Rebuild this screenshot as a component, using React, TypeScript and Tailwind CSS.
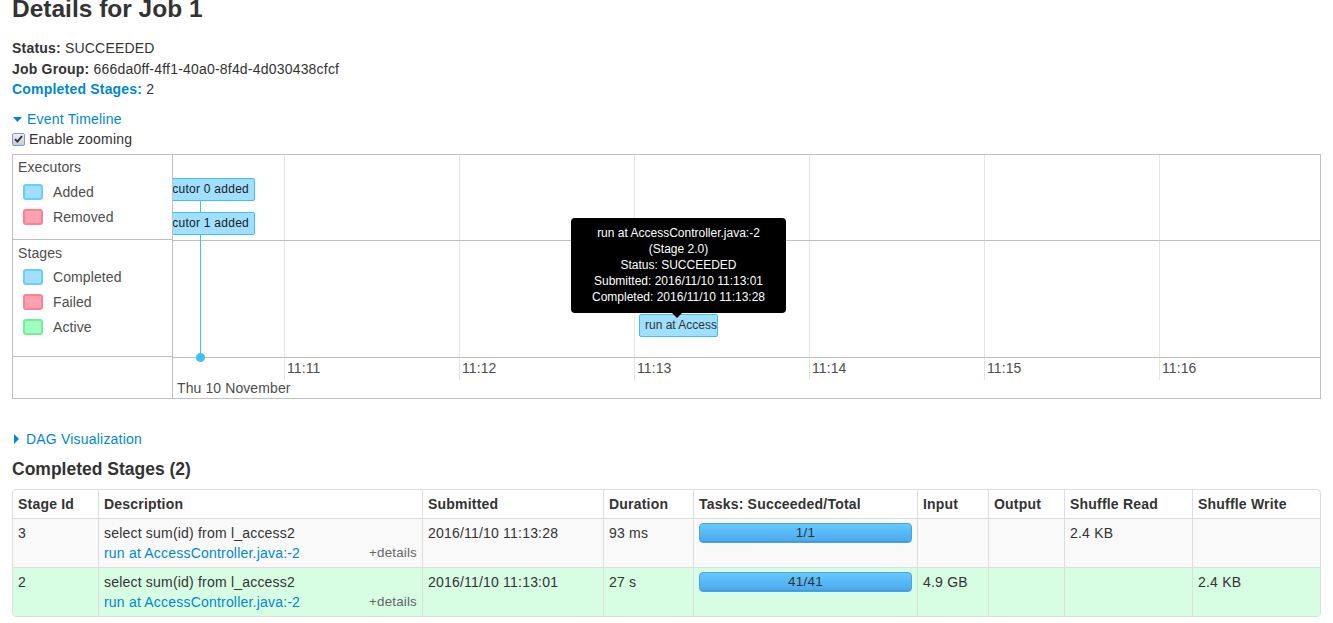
import React from 'react';

const font = { fontFamily: '"Liberation Sans", Arial, sans-serif' };

const gridX = [111, 286, 461, 636, 811, 986];
const ticks = ['11:11', '11:12', '11:13', '11:14', '11:15', '11:16'];

function Swatch({ kind }: { kind: 'blue' | 'red' | 'green' }) {
  const cls =
    kind === 'blue'
      ? 'bg-[#a0dfff] border-[#6ccbff]'
      : kind === 'red'
        ? 'bg-[#ffa1b0] border-[#ff7f95]'
        : 'bg-[#a0ffc0] border-[#6ff09a]';
  return <span className={`w-[20px] h-[16px] rounded-[3px] border-2 ${cls}`} />;
}

function LegendItem({ kind, label }: { kind: 'blue' | 'red' | 'green'; label: string }) {
  return (
    <div className="h-[25px] flex items-center pl-[5px] gap-[10px]">
      <Swatch kind={kind} />
      <span>{label}</span>
    </div>
  );
}

function Timeline() {
  return (
    <div className="mt-[5px] border border-[#bfbfbf] flex text-[14px] leading-[20px] text-[#4d4d4d] tracking-[0.1px]">
      {/* legend */}
      <div className="w-[160px] border-r border-[#bfbfbf] flex flex-col">
        <div className="h-[85px] pl-[5px] pt-[2px] border-b border-[#bfbfbf]">
          <div>Executors</div>
          <div className="mt-[2px]">
            <LegendItem kind="blue" label="Added" />
            <LegendItem kind="red" label="Removed" />
          </div>
        </div>
        <div className="h-[117px] pl-[5px] pt-[3px] border-b border-[#bfbfbf]">
          <div>Stages</div>
          <div className="mt-[1px]">
            <LegendItem kind="blue" label="Completed" />
            <LegendItem kind="red" label="Failed" />
            <LegendItem kind="green" label="Active" />
          </div>
        </div>
        <div className="h-[40px]" />
      </div>

      {/* canvas */}
      <div className="relative flex-1 h-[243px] overflow-hidden">
        {gridX.map((x) => (
          <React.Fragment key={x}>
            <div className="absolute top-0 h-[202px] w-px bg-[#e5e5e5]" style={{ left: x }} />
            <div className="absolute top-[203px] h-[22px] w-px bg-[#e5e5e5]" style={{ left: x }} />
          </React.Fragment>
        ))}
        <div className="absolute left-0 right-0 top-[85px] h-px bg-[#bfbfbf]" />
        <div className="absolute left-0 right-0 top-[202px] h-px bg-[#bfbfbf]" />

        {/* executor line + dot */}
        <div className="absolute left-[27px] top-[46px] h-[156px] w-px bg-[#3ec0ff]" />
        <div className="absolute left-[23px] top-[198px] w-[9px] h-[9px] rounded-full bg-[#3ec0ff]" />

        <div className="absolute left-[-40px] top-[23px] w-[122px] h-[23px] border border-[#3ec0ff] rounded-[2px] bg-[#a0dfff] pr-[5px] text-right text-[12px] leading-[21px] text-[#1a1a1a] whitespace-nowrap tracking-[0.25px]">
          Executor 0 added
        </div>
        <div className="absolute left-[-40px] top-[57px] w-[122px] h-[23px] border border-[#3ec0ff] rounded-[2px] bg-[#a0dfff] pr-[5px] text-right text-[12px] leading-[21px] text-[#1a1a1a] whitespace-nowrap tracking-[0.25px]">
          Executor 1 added
        </div>

        <div className="absolute left-[466px] top-[159px] w-[79px] h-[23px] border border-[#3ec0ff] rounded-[2px] bg-[#a0dfff] px-[5px] text-[12px] leading-[21px] text-[#333] whitespace-nowrap overflow-hidden tracking-[0px]">
          run at AccessController.java:-2
        </div>

        {/* tooltip */}
        <div className="absolute left-[398px] top-[63px] w-[215px] h-[95px] bg-black rounded-[4px] text-white text-[12px] leading-[16px] text-center pt-[7px] tracking-[0px]">
          <div>run at AccessController.java:-2</div>
          <div>(Stage 2.0)</div>
          <div>Status: SUCCEEDED</div>
          <div>Submitted: 2016/11/10 11:13:01</div>
          <div>Completed: 2016/11/10 11:13:28</div>
          <div className="absolute left-[101px] top-[95px] w-0 h-0 border-l-[5px] border-r-[5px] border-t-[5px] border-l-transparent border-r-transparent border-t-black" />
        </div>

        {/* axis */}
        {gridX.map((x, i) => (
          <div key={ticks[i]} className="absolute top-[203px]" style={{ left: x + 3 }}>
            {ticks[i]}
          </div>
        ))}
        <div className="absolute left-[4px] top-[223px]">Thu 10 November</div>
      </div>
    </div>
  );
}

const cols = 'grid grid-cols-[85px_324px_181px_90px_224px_71px_76px_128px_1fr]';
const cell = 'px-[5px] py-[4px] border-l border-[#ddd]';

const stages = [
  { id: '3', submitted: '2016/11/10 11:13:28', duration: '93 ms', tasks: '1/1', input: '', output: '', read: '2.4 KB', write: '', bg: 'bg-[#f9f9f9]' },
  { id: '2', submitted: '2016/11/10 11:13:01', duration: '27 s', tasks: '41/41', input: '4.9 GB', output: '', read: '', write: '2.4 KB', bg: 'bg-[#d7fde3]' },
];

function StagesTable() {
  const heads = ['Stage Id', 'Description', 'Submitted', 'Duration', 'Tasks: Succeeded/Total', 'Input', 'Output', 'Shuffle Read', 'Shuffle Write'];
  return (
    <div className="mt-[10px] border border-[#ddd] rounded-[4px] overflow-hidden text-[14px] leading-[20px] tracking-[0.2px]">
      <div className={cols}>
        {heads.map((h, i) => (
          <div key={h} className={`px-[5px] py-[4px] font-bold ${i ? 'border-l border-[#ddd]' : ''}`}>
            {h}
          </div>
        ))}
      </div>
      {stages.map((s) => (
        <div key={s.id} className={`${cols} border-t border-[#ddd] ${s.bg}`}>
          <div className="px-[5px] py-[4px]">{s.id}</div>
          <div className={cell}>
            <div>select sum(id) from l_access2</div>
            <div className="flex justify-between items-center">
              <span className="text-[#0088cc]">run at AccessController.java:-2</span>
              <span className="text-[13.33px] text-[#666]">+details</span>
            </div>
          </div>
          <div className={cell}>{s.submitted}</div>
          <div className={cell}>{s.duration}</div>
          <div className={cell}>
            <div className="h-[20px] rounded-[4px] bg-gradient-to-b from-[#66c9ff] to-[#4aa8ec] border border-[#4aa3e4] text-center text-[13.5px] leading-[18px] text-[#333] shadow-[inset_0_-1px_0_rgba(0,0,0,0.1)]">
              {s.tasks}
            </div>
          </div>
          <div className={cell}>{s.input}</div>
          <div className={cell}>{s.output}</div>
          <div className={cell}>{s.read}</div>
          <div className={cell}>{s.write}</div>
        </div>
      ))}
    </div>
  );
}

export default function App() {
  return (
    <div style={font} className="bg-white text-[#333] px-[12px] h-[623px] overflow-hidden">
      <h3 className="text-[24.5px] leading-[28px] font-bold mt-[-5px] text-[#333]">Details for Job 1</h3>

      <ul className="mt-[15px] text-[14px] leading-[20px] space-y-[0.5px] tracking-[0.2px]">
        <li>
          <strong>Status:</strong> SUCCEEDED
        </li>
        <li>
          <strong>Job Group:</strong> 666da0ff-4ff1-40a0-8f4d-4d030438cfcf
        </li>
        <li>
          <strong className="text-[#0088cc]">Completed Stages:</strong> 2
        </li>
      </ul>

      <div className="mt-[10px] text-[14px] leading-[20px] flex items-center gap-[5px] text-[#0088cc] tracking-[0.2px]">
        <svg width="9" height="5" viewBox="0 0 9 5" className="ml-[1px] mt-[1px]">
          <path d="M0 0h9L4.5 5z" fill="#0088cc" />
        </svg>
        <span>Event Timeline</span>
      </div>

      <label className="flex items-center gap-[4px] text-[14px] leading-[20px] tracking-[0.2px]">
        <span className="w-[13px] h-[13px] border border-[#7b9ad6] rounded-[2px] bg-gradient-to-b from-[#eef0f5] to-[#c9ccd6] flex items-center justify-center">
          <svg width="9" height="8" viewBox="0 0 9 8">
            <path d="M1 4.2 3.4 6.6 8 1.2" fill="none" stroke="#333" strokeWidth="1.9" />
          </svg>
        </span>
        <span>Enable zooming</span>
      </label>

      <Timeline />

      <div className="mt-[30px] text-[14px] leading-[20px] flex items-center gap-[7px] text-[#0088cc] tracking-[0.2px]">
        <svg width="5" height="10" viewBox="0 0 5 10" className="ml-[2px]">
          <path d="M0 0v10l5-5z" fill="#0088cc" />
        </svg>
        <span>DAG Visualization</span>
      </div>

      <h4 className="mt-[10px] text-[17.5px] leading-[20px] font-bold">Completed Stages (2)</h4>

      <StagesTable />
    </div>
  );
}
